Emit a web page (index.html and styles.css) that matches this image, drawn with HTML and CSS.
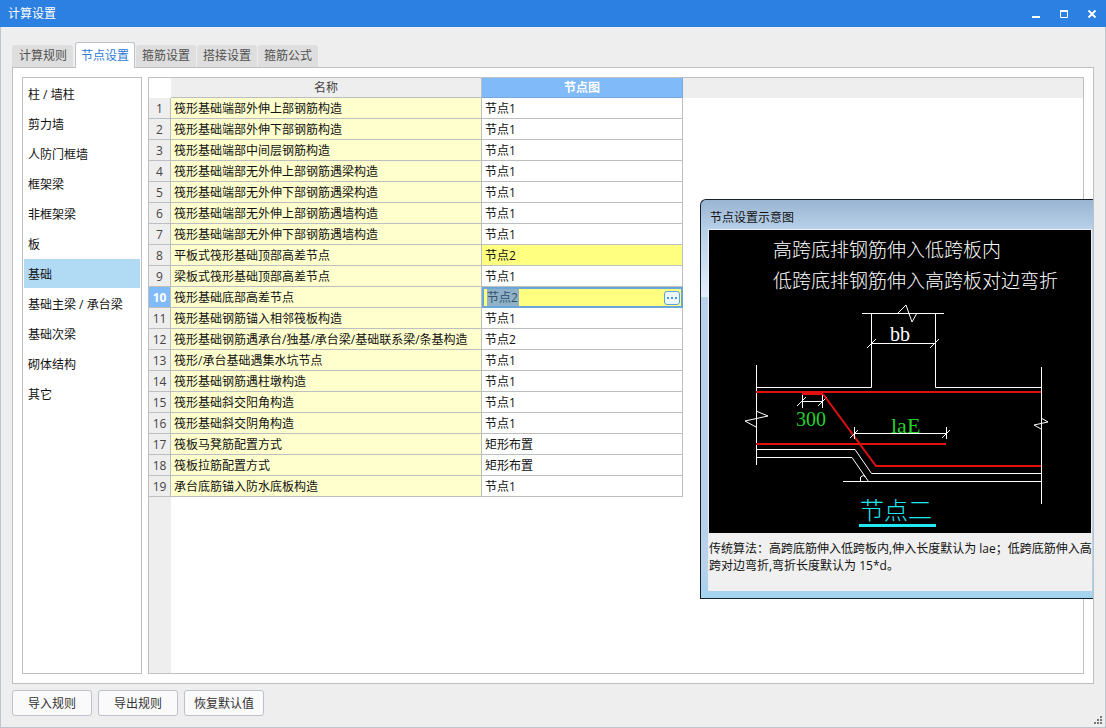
FILE: index.html
```html
<!DOCTYPE html>
<html lang="zh-CN">
<head>
<meta charset="utf-8">
<title>计算设置</title>
<link rel="stylesheet" href="styles.css">
</head>
<body>
<div class="window">
  <header class="titlebar">
    <h1 class="title">计算设置</h1>
    <button class="win-btn" aria-label="最小化"><svg width="10" height="10" viewBox="0 0 10 10"><path d="M1 8h8" stroke-width="2"/></svg></button>
    <button class="win-btn" aria-label="最大化"><svg width="10" height="10" viewBox="0 0 10 10"><path d="M1 2h8" stroke-width="2"/><path d="M1.5 2v6.500h7V2"/></svg></button>
    <button class="win-btn" aria-label="关闭"><svg width="10" height="10" viewBox="0 0 10 10"><path d="M1.500 1.500l7 7M8.500 1.500l-7 7" stroke-width="1.800"/></svg></button>
  </header>
  <main class="content">
    <div class="tabs" role="tablist">
      <button class="tab tab-first" role="tab">计算规则</button>
      <button class="tab tab-active" role="tab" aria-selected="true">节点设置</button>
      <button class="tab" role="tab">箍筋设置</button>
      <button class="tab" role="tab">搭接设置</button>
      <button class="tab" role="tab">箍筋公式</button>
    </div>
    <div class="panel">
      <nav class="sidebar">
        <button class="side-item">柱 / 墙柱</button>
        <button class="side-item">剪力墙</button>
        <button class="side-item">人防门框墙</button>
        <button class="side-item">框架梁</button>
        <button class="side-item">非框架梁</button>
        <button class="side-item">板</button>
        <button class="side-item side-active">基础</button>
        <button class="side-item">基础主梁 / 承台梁</button>
        <button class="side-item">基础次梁</button>
        <button class="side-item">砌体结构</button>
        <button class="side-item">其它</button>
      </nav>
      <div class="sheet">
        <table class="grid">
          <thead>
            <tr><td class="corner"></td><th class="col-name">名称</th><th class="col-node">节点图</th></tr>
          </thead>
          <tbody>
            <tr><th>1</th><td class="name">筏形基础端部外伸上部钢筋构造</td><td>节点1</td></tr>
            <tr><th>2</th><td class="name">筏形基础端部外伸下部钢筋构造</td><td>节点1</td></tr>
            <tr><th>3</th><td class="name">筏形基础端部中间层钢筋构造</td><td>节点1</td></tr>
            <tr><th>4</th><td class="name">筏形基础端部无外伸上部钢筋遇梁构造</td><td>节点1</td></tr>
            <tr><th>5</th><td class="name">筏形基础端部无外伸下部钢筋遇梁构造</td><td>节点1</td></tr>
            <tr><th>6</th><td class="name">筏形基础端部无外伸上部钢筋遇墙构造</td><td>节点1</td></tr>
            <tr><th>7</th><td class="name">筏形基础端部无外伸下部钢筋遇墙构造</td><td>节点1</td></tr>
            <tr><th>8</th><td class="name">平板式筏形基础顶部高差节点</td><td class="changed">节点2</td></tr>
            <tr><th>9</th><td class="name">梁板式筏形基础顶部高差节点</td><td>节点1</td></tr>
            <tr><th class="current">10</th><td class="name">筏形基础底部高差节点</td><td class="editing"><div class="editor"><input class="editor-input" type="text" value="节点2" aria-label="节点图"><button class="more" aria-label="选择节点图"><svg width="12" height="4" viewBox="0 0 12 4"><path d="M1 1h2v2H1zM5 1h2v2H5zM9 1h2v2H9z" fill="#4c98d6"/></svg></button></div></td></tr>
            <tr><th>11</th><td class="name">筏形基础钢筋锚入相邻筏板构造</td><td>节点1</td></tr>
            <tr><th>12</th><td class="name">筏形基础钢筋遇承台/独基/承台梁/基础联系梁/条基构造</td><td>节点2</td></tr>
            <tr><th>13</th><td class="name">筏形/承台基础遇集水坑节点</td><td>节点1</td></tr>
            <tr><th>14</th><td class="name">筏形基础钢筋遇柱墩构造</td><td>节点1</td></tr>
            <tr><th>15</th><td class="name">筏形基础斜交阳角构造</td><td>节点1</td></tr>
            <tr><th>16</th><td class="name">筏形基础斜交阴角构造</td><td>节点1</td></tr>
            <tr><th>17</th><td class="name">筏板马凳筋配置方式</td><td>矩形布置</td></tr>
            <tr><th>18</th><td class="name">筏板拉筋配置方式</td><td>矩形布置</td></tr>
            <tr><th>19</th><td class="name">承台底筋锚入防水底板构造</td><td>节点1</td></tr>
          </tbody>
        </table>
      </div>
      <aside class="preview">
        <h2 class="preview-title">节点设置示意图</h2>
        <div class="preview-body">
          <svg class="drawing" viewBox="0 0 382 303" role="img" aria-label="节点二">
            <g class="note">
              <text x="64" y="27">高跨底排钢筋伸入低跨板内</text>
              <text x="64" y="58">低跨底排钢筋伸入高跨板对边弯折</text>
            </g>
            <g class="line">
              <path d="M153 83.500H235M189 83l8-8 6 17 5-9"/>
              <path d="M47.500 157.500H162.500V83.500M226.500 83.500V157.500H332.500"/>
              <path d="M162.500 113.500H226.500M158 118l9-9M221 118l9-9"/>
              <path d="M47.500 135V235M332.500 137V274"/>
              <path d="M47 181l12 5-23 5 11 6M332 188l7 4-14 3 7 4"/>
              <path d="M93.500 164V178M113.500 164V178M93.500 171.500H113.500M88 176l9-9M109 176l9-9"/>
              <path d="M47 219.500H146L162.500 243.500H332M47 227.500H143L159.500 251.500M134 251.500H332M151.500 251V247q3-3 5 0"/>
            </g>
            <g class="bar">
              <path d="M47 162H332M93 164H114M47 214H237M114 164L167 236H332"/>
            </g>
            <path class="line" d="M145.500 197V209M237.500 197V209M145.500 203.500H237.500M141 208l8-8M233 208l8-8"/>
            <text class="dim" x="181" y="111">bb</text>
            <text class="dim green" x="87" y="196">300</text>
            <text class="dim dim-wide green" x="182" y="203">laE</text>
            <text class="caption" x="151" y="289">节点二</text>
            <path class="underline" d="M150 295.500H227"/>
          </svg>
          <p class="desc">传统算法<span class="mid">：</span>高跨底筋伸入低跨板内,伸入长度默认为 lae<span class="mid">；</span>低跨底筋伸入高<br>跨对边弯折,弯折长度默认为 15*d。</p>
        </div>
      </aside>
    </div>
    <footer class="actions">
      <button class="btn">导入规则</button>
      <button class="btn">导出规则</button>
      <button class="btn">恢复默认值</button>
    </footer>
  </main>
  <svg class="grip" width="8" height="8" viewBox="0 0 8 8"><path d="M6 0h2v2H6zM3 3h2v2H3zM6 3h2v2H6zM0 6h2v2H0zM3 6h2v2H3zM6 6h2v2H6z" fill="#777"/></svg>
</div>
</body>
</html>
```

FILE: styles.css
```css
* {
  box-sizing: border-box;
}

body {
  margin: 0;
  font: 12px/18px "Open Sans", "Noto Sans CJK SC", sans-serif;
  color: #111;
}

button,
input {
  margin: 0;
  padding: 0;
  border: 0;
  font: inherit;
  color: inherit;
  background: none;
}

.window {
  position: relative;
  display: flex;
  flex-direction: column;
  min-height: 100vh;
  background: #eeeeef;
}

.titlebar {
  display: flex;
  height: 27px;
  padding-left: 8px;
  align-items: center;
  background: #2c80e2;
  color: #fff;
}

.title {
  flex: 1;
  margin: 0;
  padding-top: 1px;
  font-size: 12px;
  font-weight: 400;
}

.win-btn {
  display: flex;
  width: 28px;
  height: 27px;
  align-items: center;
  justify-content: center;
}

.win-btn svg {
  fill: none;
  stroke: #fff;
}

.content {
  display: flex;
  flex: 1;
  flex-direction: column;
  padding: 15px 11px 11px;
  border: 1px solid #bfc5d0;
  border-top: 0;
}

.tabs {
  display: flex;
  gap: 1px;
  align-items: flex-end;
  height: 25px;
}

.tab {
  height: 22px;
  padding: 0 6px;
  border-radius: 3px 3px 0 0;
  background: #dedede;
  color: #505050;
}

.tab-first {
  margin-right: 1px;
  padding-left: 7px;
}

.tab-active {
  z-index: 1;
  height: 26px;
  margin-bottom: -1px;
  padding: 0 5px;
  border: 1px solid #bdc1c9;
  border-bottom: 0;
  background: #fff;
  color: #2c7bd9;
}

.panel {
  position: relative;
  display: flex;
  flex: 1;
  gap: 6px;
  padding: 9px;
  border: 1px solid #bdc1c6;
  background: #fff;
}

.sidebar {
  display: flex;
  flex-direction: column;
  gap: 1px;
  width: 120px;
  padding: 1px;
  border: 1px solid #bdc1c6;
}

.side-item {
  height: 29px;
  padding: 2px 0 0 4px;
  text-align: left;
}

.side-active {
  background: #b1daf5;
}

.sheet {
  flex: 1;
  border: 1px solid #bdc1c6;
  background:
    linear-gradient(#eeeeef, #eeeeef) 0 0 / 100% 20px no-repeat,
    linear-gradient(#eeeeef, #eeeeef) 0 0 / 22px 100% no-repeat;
}

.grid {
  width: 534px;
  table-layout: fixed;
  border-collapse: separate;
  border-spacing: 0;
}

.grid th,
.grid td {
  height: 21px;
  padding: 2px 3px 0;
  border: solid #bbbfc0;
  border-width: 0 1px 1px 0;
  background: #fff;
  line-height: 18px;
  white-space: nowrap;
}

.grid th {
  padding: 2px 0 0;
  background: #eeeeef;
  color: #444;
  font-weight: 400;
}

.grid thead th,
.grid .corner {
  height: 20px;
  padding: 1px 0 0;
}

.grid .corner {
  width: 22px;
  border-color: #fff;
}

.grid .col-name {
  width: 311px;
}

.grid .col-node {
  width: 201px;
  border-color: #75a9e0;
  background: #80baf9;
  color: #fff;
  font-weight: 700;
}

.grid .current {
  background: #80baf9;
  color: #fff;
  font-weight: 700;
}

.grid .name {
  background: #ffffcd;
}

.grid .changed {
  background: #ffff80;
}

.grid .editing {
  padding: 0;
  border: 0;
}

.editor {
  display: flex;
  height: 21px;
  padding: 0 1px 0 3px;
  align-items: center;
  justify-content: space-between;
  border: 2px solid #6aa6d8;
  background: #ffff80;
}

.editor-input {
  width: 32px;
  height: 17px;
  background: #8fb2c8;
  color: #35506b;
}

.more {
  display: flex;
  width: 16px;
  height: 14px;
  align-items: center;
  justify-content: center;
  border: 1px solid #5ea3d8;
  border-radius: 3px;
  background: #eef6fd;
}

.preview {
  position: absolute;
  top: 131px;
  right: 0;
  width: 393px;
  padding: 0 1px 7px 7px;
  border: 1px solid #16202c;
  border-right: 0;
  border-radius: 6px 0 0 0;
  background:
    linear-gradient(#9ab5d2, #b9d1ea) 0 0 / 100% 30px no-repeat,
    linear-gradient(#b9cfe8, #e3eefa) 0 30px / 7px 67px no-repeat,
    linear-gradient(#b9d1ea 92%, #a4d4f0);
}

.preview-title {
  margin: 0;
  padding: 9px 0 2px 2px;
  font-size: 12px;
  font-weight: 400;
}

.preview-body {
  padding: 1px 1px 0 0;
  border-left: 1px solid #e8eef5;
  background: #f0f0f0;
}

.drawing {
  display: block;
  width: 100%;
  background: #000;
  fill: none;
}

.note {
  fill: #fff;
  font: 300 19px "Noto Sans CJK SC", sans-serif;
}

.line {
  stroke: #fff;
}

.bar {
  stroke: #e01010;
  stroke-width: 2;
}

.dim {
  fill: #fff;
  font: 20px "Liberation Serif", serif;
}

.dim-wide {
  font-size: 22px;
}

.green {
  fill: #25d22c;
}

.caption {
  fill: #20e8f0;
  font: 300 24px "Noto Sans CJK SC", sans-serif;
}

.underline {
  stroke: #20e8f0;
  stroke-width: 3;
}

.desc {
  margin: 0;
  height: 58px;
  padding-top: 7px;
  line-height: 17px;
  white-space: nowrap;
}

.mid {
  font-family: "Noto Sans CJK TC", sans-serif;
  line-height: 1;
}

.actions {
  display: flex;
  gap: 6px;
  padding-top: 6px;
}

.btn {
  width: 80px;
  height: 26px;
  padding-top: 1px;
  border: 1px solid #bcc1ca;
  border-radius: 3px;
  background: #fafafb;
  color: #333;
}

.grip {
  position: absolute;
  right: 4px;
  bottom: 4px;
}
```
